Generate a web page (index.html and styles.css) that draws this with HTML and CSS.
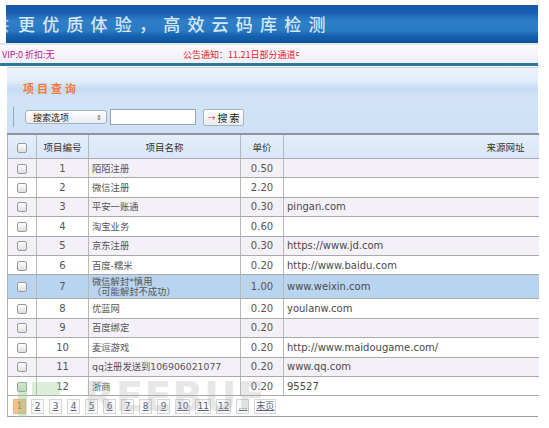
FILE: index.html
```html
<!DOCTYPE html>
<html lang="zh-CN">
<head>
<meta charset="utf-8">
<title>项目查询</title>
<link rel="stylesheet" href="styles.css">
</head>
<body>
<div class="page">
  <header class="banner"><span class="cut"><span>供</span></span><span class="slogan">更优质体验，高效云码库检测</span></header>
  <div class="infobar">
    <span class="vip">VIP:0 折扣:无</span>
    <span class="notice">公告通知：11.21日部分通道<span class="cut-end"><span>中</span></span></span>
  </div>
  <div class="main">
    <section class="query-panel">
      <h2 class="panel-title">项目查询</h2>
      <div class="search-row">
        <span class="sep"></span>
        <div class="select"><span>搜索选项</span><span class="arrows">⇕</span></div>
        <div class="text-input"></div>
        <div class="btn"><span class="btn-arrow">→</span>搜 索</div>
      </div>
    </section>
    <table class="grid">
      <colgroup>
        <col class="c-chk"><col class="c-no"><col class="c-name"><col class="c-price"><col class="c-url">
      </colgroup>
      <thead>
        <tr><th><span class="chk"></span></th><th>项目编号</th><th>项目名称</th><th>单价</th><th class="url-h">来源网址</th></tr>
      </thead>
      <tbody>
        <tr class="odd"><td><span class="chk"></span></td><td class="no">1</td><td class="name">陌陌注册</td><td class="price">0.50</td><td class="url"></td></tr>
        <tr><td><span class="chk"></span></td><td class="no">2</td><td class="name">微信注册</td><td class="price">2.20</td><td class="url"></td></tr>
        <tr class="odd"><td><span class="chk"></span></td><td class="no">3</td><td class="name">平安一账通</td><td class="price">0.30</td><td class="url">pingan.com</td></tr>
        <tr><td><span class="chk"></span></td><td class="no">4</td><td class="name">淘宝业务</td><td class="price">0.60</td><td class="url"></td></tr>
        <tr class="odd"><td><span class="chk"></span></td><td class="no">5</td><td class="name">京东注册</td><td class="price">0.30</td><td class="url">https://www.jd.com</td></tr>
        <tr><td><span class="chk"></span></td><td class="no">6</td><td class="name">百度-糯米</td><td class="price">0.20</td><td class="url">http://www.baidu.com</td></tr>
        <tr class="sel"><td><span class="chk"></span></td><td class="no">7</td><td class="name two">微信解封*慎用<br>（可能解封不成功）</td><td class="price">1.00</td><td class="url">www.weixin.com</td></tr>
        <tr><td><span class="chk"></span></td><td class="no">8</td><td class="name">优蓝网</td><td class="price">0.20</td><td class="url">youlanw.com</td></tr>
        <tr class="odd"><td><span class="chk"></span></td><td class="no">9</td><td class="name">百度绑定</td><td class="price">0.20</td><td class="url"></td></tr>
        <tr><td><span class="chk"></span></td><td class="no">10</td><td class="name">麦逗游戏</td><td class="price">0.20</td><td class="url">http://www.maidougame.com/</td></tr>
        <tr class="odd"><td><span class="chk"></span></td><td class="no">11</td><td class="name">qq注册发送到106906021077</td><td class="price">0.20</td><td class="url">www.qq.com</td></tr>
        <tr><td><span class="chk"></span></td><td class="no">12</td><td class="name">浙商</td><td class="price">0.20</td><td class="url">95527</td></tr>
      </tbody>
    </table>
    <nav class="pager">
      <span class="pg cur">1</span>
      <a class="pg">2</a><a class="pg">3</a><a class="pg">4</a><a class="pg">5</a><a class="pg">6</a><a class="pg">7</a><a class="pg">8</a><a class="pg">9</a><a class="pg">10</a><a class="pg">11</a><a class="pg">12</a><a class="pg">...</a><a class="pg">末页</a>
    </nav>
  </div>
  <div class="watermark" aria-hidden="true">
    <span class="wm-logo"><span class="wm-bar"></span><span class="wm-block"></span></span>
    <span class="wm-text">REEBUF</span>
  </div>
</div>
</body>
</html>
```
FILE: styles.css
```css
html, body {
  margin: 0;
  padding: 0;
  background: #ffffff;
}
body {
  font-family: "DejaVu Sans", "Noto Sans CJK SC", sans-serif;
  font-size: 10px;
  color: #555;
}
.page {
  position: relative;
  width: 538px;
  padding-top: 5px;
}
.banner {
  margin-left: 6px;
  height: 38px;
  line-height: 38px;
  background: linear-gradient(#1555a6 0%, #1b62b3 22%, #2f7fc8 42%, #2a79c3 68%, #1460ad 82%, #0e53a0 100%);
  color: #d4e6f8;
  font-family: "Noto Sans CJK SC", sans-serif;
  font-size: 17px;
  font-weight: 500;
  white-space: nowrap;
  overflow: hidden;
}
.cut {
  display: inline-block;
  width: 3px;
  overflow: hidden;
  vertical-align: top;
  opacity: 0.8;
}
.cut span {
  display: inline-block;
  margin-left: -14px;
}
.slogan {
  margin-left: 9px;
  letter-spacing: 7.2px;
}
.infobar {
  display: flex;
  align-items: center;
  height: 18px;
  border-top: 2px solid #dfe8f2;
  border-bottom: 3px solid #2a7b9b;
  background: linear-gradient(#fbfafd, #f1eff7);
  font-family: "Noto Sans CJK SC", sans-serif;
  font-size: 9px;
  white-space: nowrap;
}
.vip {
  color: #b3228c;
  padding-left: 2px;
  width: 181px;
}
.notice {
  color: #e41d2a;
}
.cut-end {
  display: inline-block;
  width: 4px;
  overflow: hidden;
  vertical-align: top;
}
.main {
  margin-left: 7px;
  width: 531px;
  padding-top: 1px;
}
.query-panel {
  height: 66px;
  border-top: 1px solid #c7d3e2;
  background: linear-gradient(#eef3fb 0%, #e2ecf9 20%, #c4dbf4 33%, #d3e4f7 45%, #cde0f6 100%);
  box-sizing: border-box;
  padding-top: 11px;
}
.panel-title {
  margin: 0 0 0 16px;
  height: 18px;
  line-height: 18px;
  font-family: "Noto Sans CJK SC", sans-serif;
  font-size: 11px;
  font-weight: bold;
  letter-spacing: 3px;
  color: #f3783c;
}
.search-row {
  display: flex;
  align-items: center;
  height: 20px;
  margin-top: 10px;
}
.sep {
  width: 1px;
  height: 20px;
  background: #9aa8b8;
  margin-left: 6px;
  margin-right: 11px;
}
.select {
  display: flex;
  justify-content: space-between;
  align-items: center;
  width: 82px;
  height: 14px;
  box-sizing: border-box;
  padding: 0 4px 0 7px;
  border: 1px solid #a7b0bb;
  border-radius: 3px;
  background: linear-gradient(#ffffff, #e9ecf0);
  font-family: "Noto Sans CJK SC", sans-serif;
  font-size: 9px;
  color: #222;
}
.arrows {
  font-size: 7px;
  color: #666;
}
.text-input {
  width: 86px;
  height: 16px;
  box-sizing: border-box;
  margin-left: 3px;
  border: 1px solid #98a4b2;
  background: #ffffff;
}
.btn {
  display: flex;
  align-items: center;
  justify-content: center;
  width: 41px;
  height: 17px;
  box-sizing: border-box;
  margin-left: 7px;
  border: 1px solid #a9b3be;
  border-radius: 2px;
  background: linear-gradient(#ffffff, #e8ebef);
  font-family: "Noto Sans CJK SC", sans-serif;
  font-size: 10px;
  color: #222;
  white-space: nowrap;
}
.btn-arrow {
  color: #e0302c;
  font-size: 8px;
  margin-right: 2px;
}
.grid {
  width: 531px;
  border-collapse: collapse;
  table-layout: fixed;
  border-left: 1px solid #b2b2b2;
}
.c-chk { width: 29px; }
.c-no { width: 52px; }
.c-name { width: 152px; }
.c-price { width: 43px; }
.c-url { width: 255px; }
.grid th {
  height: 23px;
  padding: 0;
  background: linear-gradient(#e3eefa, #d7e6f7);
  border-top: 2px solid #8f9499;
  border-bottom: 1px solid #a8acb0;
  border-left: 1px solid #b5b9be;
  font-family: "Noto Sans CJK SC", sans-serif;
  font-weight: normal;
  font-size: 9.5px;
  color: #333;
  text-align: center;
}
.grid th:first-child,
.grid td:first-child {
  border-left: none;
}
.grid th.url-h {
  text-align: right;
  padding-right: 14px;
}
.grid td {
  height: 18.4px;
  padding: 0;
  border-bottom: 1px solid #a9a9a9;
  border-left: 1px solid #b8b8b8;
  text-align: center;
  white-space: nowrap;
  line-height: 11px;
}
.grid tr.odd td {
  background: #f4f0f8;
}
.grid tr.sel td {
  background: #b9d4ef;
  height: 23px;
}
.grid td.name {
  text-align: left;
  padding-left: 3px;
  font-size: 9.3px;
}
.grid td.name.two {
  line-height: 10px;
}
.grid td.price {
  text-align: center;
}
.grid td.url {
  text-align: left;
  padding-left: 3px;
  color: #4a4a4a;
}
.chk {
  display: inline-block;
  width: 8px;
  height: 8px;
  border: 1px solid #9a9a9a;
  border-radius: 2px;
  background: linear-gradient(#ffffff, #dedede);
  vertical-align: middle;
}
.pager {
  display: flex;
  align-items: center;
  gap: 5px;
  height: 20px;
  padding-left: 5px;
  border-left: 1px solid #b2b2b2;
  border-bottom: 1px solid #9c9c9c;
  font-size: 9px;
}
.pg {
  display: inline-block;
  min-width: 9px;
  height: 13px;
  line-height: 13px;
  padding: 0 1px;
  text-align: center;
  border: 1px solid #d6d6d6;
  background: #fafafa;
  color: #55607a;
  text-decoration: underline;
}
.pg.cur {
  background: #f7c08d;
  border-color: #efb07a;
  color: #c5621e;
  text-decoration: none;
}
.watermark {
  position: absolute;
  left: 18px;
  top: 376px;
  display: flex;
  align-items: flex-start;
  gap: 24px;
  pointer-events: none;
}
.wm-logo {
  position: relative;
  width: 42px;
  height: 42px;
}
.wm-bar {
  position: absolute;
  left: 0;
  top: 6px;
  width: 9px;
  height: 36px;
  background: rgba(150, 205, 150, 0.45);
}
.wm-block {
  position: absolute;
  left: 14px;
  top: 6px;
  width: 28px;
  height: 14px;
  background: rgba(150, 205, 150, 0.35);
}
.wm-text {
  font-family: "DejaVu Sans", sans-serif;
  font-size: 40px;
  font-weight: bold;
  line-height: 42px;
  letter-spacing: 1px;
  color: rgba(170, 170, 170, 0.3);
}
```
